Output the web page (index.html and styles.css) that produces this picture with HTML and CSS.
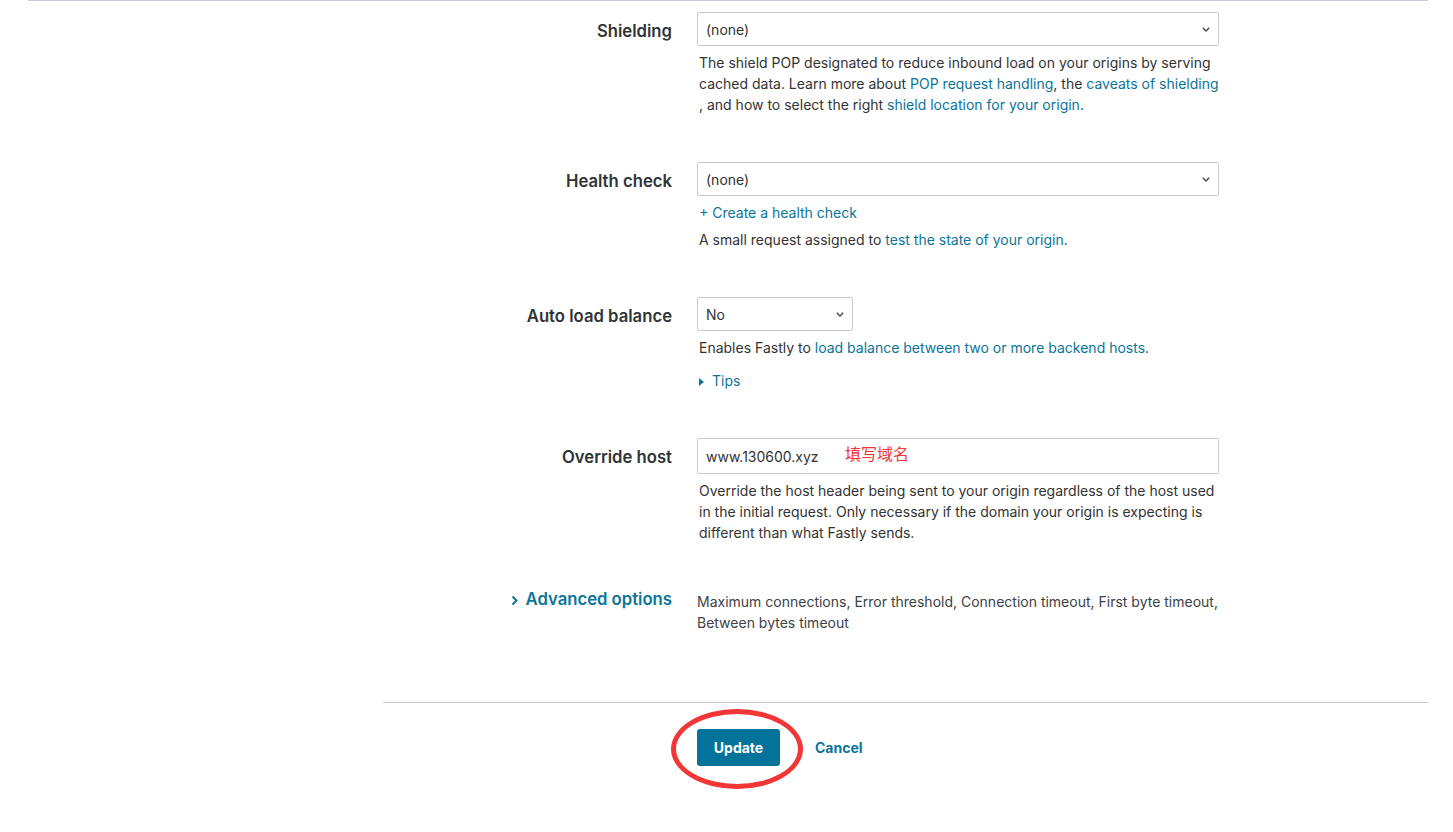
FILE: index.html
```html
<!DOCTYPE html>
<html lang="en">
<head>
<meta charset="utf-8">
<title>Backend settings</title>
<link rel="stylesheet" href="styles.css">
</head>
<body>
<main class="page">
  <section class="form">
    <div class="row">
      <div class="label">Shielding</div>
      <div class="field">
        <div class="select"><span>(none)</span><svg class="chev" width="8" height="5" viewBox="0 0 8 5"><path d="M0.8 0.8l3.2 3.2 3.2-3.2" fill="none" stroke="#444" stroke-width="1.3"/></svg></div>
        <p class="help">The shield POP designated to reduce inbound load on your origins by serving cached data. Learn more about <a href="#">POP request handling</a>, the <a href="#">caveats of shielding</a> , and how to select the right <a href="#">shield location for your origin</a>.</p>
      </div>
    </div>

    <div class="row">
      <div class="label">Health check</div>
      <div class="field">
        <div class="select"><span>(none)</span><svg class="chev" width="8" height="5" viewBox="0 0 8 5"><path d="M0.8 0.8l3.2 3.2 3.2-3.2" fill="none" stroke="#444" stroke-width="1.3"/></svg></div>
        <p class="help"><a href="#">+ Create a health check</a></p>
        <p class="help">A small request assigned to <a href="#">test the state of your origin</a>.</p>
      </div>
    </div>

    <div class="row">
      <div class="label">Auto load balance</div>
      <div class="field">
        <div class="select narrow"><span>No</span><svg class="chev" width="8" height="5" viewBox="0 0 8 5"><path d="M0.8 0.8l3.2 3.2 3.2-3.2" fill="none" stroke="#444" stroke-width="1.3"/></svg></div>
        <p class="help">Enables Fastly to <a href="#">load balance between two or more backend hosts</a>.</p>
        <p class="help tips"><a href="#"><svg class="tri" width="5" height="8" viewBox="0 0 5 8"><path d="M0 0l5 4-5 4z" fill="#0b7599"/></svg>Tips</a></p>
      </div>
    </div>

    <div class="row">
      <div class="label">Override host</div>
      <div class="field">
        <div class="input"><span>www.130600.xyz</span><span class="note">填写域名</span></div>
        <p class="help">Override the host header being sent to your origin regardless of the host used in the initial request. Only necessary if the domain your origin is expecting is different than what Fastly sends.</p>
      </div>
    </div>

    <div class="row last">
      <div class="label adv"><a href="#"><svg class="adv-chev" width="7" height="11" viewBox="0 0 7 11"><path d="M1.5 1.5l4 4-4 4" fill="none" stroke="#0b7599" stroke-width="2"/></svg>Advanced options</a></div>
      <div class="field">
        <p class="help muted">Maximum connections, Error threshold, Connection timeout, First byte timeout, Between bytes timeout</p>
      </div>
    </div>
  </section>

  <footer class="actions">
    <div class="btn-wrap">
      <button class="btn" type="button">Update</button>
      <span class="circle"></span>
    </div>
    <a class="cancel" href="#">Cancel</a>
  </footer>
</main>
</body>
</html>
```

FILE: styles.css
```css
* { box-sizing: border-box; }

body {
  margin: 0;
  background: #fff;
  font-family: Inter, "Noto Sans", "Liberation Sans", "Noto Sans CJK SC", sans-serif;
  color: #333;
}

.page {
  margin-left: 28px;
  width: 1400px;
  border-top: 1px solid #c5ccd3;
}

.form {
  padding-top: 11px;
  padding-bottom: 22px;
}

.row {
  display: flex;
  align-items: flex-start;
  margin-bottom: 47px;
}

.label {
  width: 669px;
  padding-right: 25px;
  padding-top: 2px;
  text-align: right;
  font-size: 16.7px;
  font-weight: 600;
  line-height: 35px;
  color: #2f3437;
}

.label.adv {
  line-height: 21px;
  padding-top: 0;
  margin-top: -1px;
}

.label.adv a {
  color: #0b7599;
  text-decoration: none;
  font-weight: 600;
}

.adv-chev {
  margin-right: 8px;
  vertical-align: -1px;
}

.field {
  width: 522px;
}

.select {
  height: 34px;
  border: 1px solid #c4cbd2;
  border-radius: 2px;
  display: flex;
  align-items: center;
  justify-content: space-between;
  padding: 0 8px 0 8px;
  font-size: 14px;
  color: #333;
}

.select.narrow {
  width: 156px;
}

.input {
  position: relative;
  height: 36px;
  border: 1px solid #c4cbd2;
  border-radius: 2px;
  display: flex;
  align-items: center;
  padding: 0 8px;
  font-size: 14px;
  color: #333;
}

.note {
  position: absolute;
  left: 147px;
  top: 4px;
  font-size: 16px;
  color: #f0383a;
  font-family: "Noto Sans CJK SC", sans-serif;
  line-height: 20px;
}

.help {
  margin: 6px 0 0;
  font-size: 14px;
  line-height: 21px;
  color: #333;
  padding-left: 2px;
}

.help.muted {
  margin: 1px 0 0;
  padding-left: 0;
  color: #3d4246;
}

.help.tips {
  margin-top: 12px;
}

.help a {
  color: #0b7599;
  text-decoration: none;
}

.tri {
  margin-right: 8px;
  vertical-align: 0;
}

.actions {
  margin-left: 355px;
  border-top: 1px solid #c5ccd3;
  padding: 26px 0 40px 314px;
  display: flex;
  align-items: center;
  gap: 35px;
}

.btn-wrap {
  position: relative;
}

.btn {
  display: block;
  width: 83px;
  height: 37px;
  border: none;
  border-radius: 3px;
  background: #04739a;
  color: #fff;
  font-family: inherit;
  font-size: 14px;
  font-weight: 700;
}

.circle {
  position: absolute;
  left: -26px;
  top: -20px;
  width: 132px;
  height: 80px;
  border: 5px solid #f23535;
  border-radius: 50%;
  pointer-events: none;
}

.cancel {
  color: #0b7599;
  font-size: 14px;
  font-weight: 700;
  text-decoration: none;
}
```
